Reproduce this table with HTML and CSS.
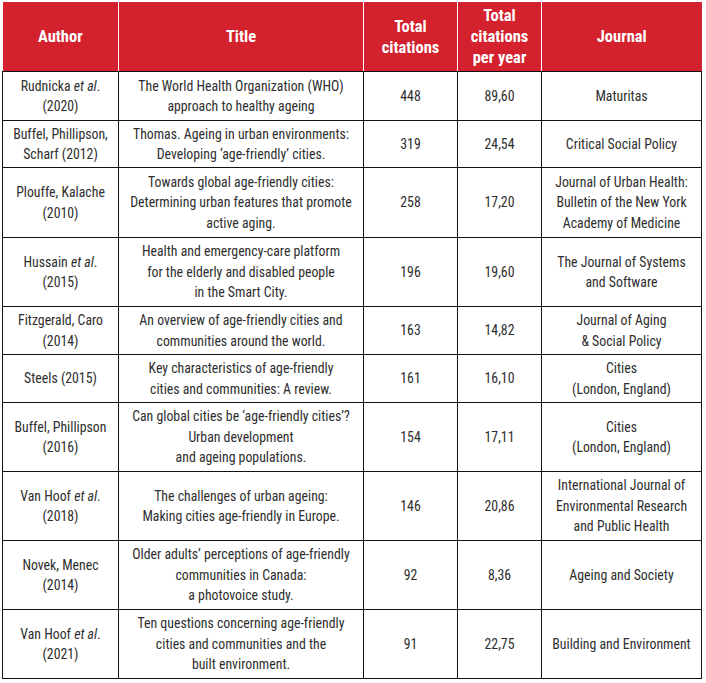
FILE: index.html
```
<!DOCTYPE html>
<html>
<head>
<meta charset="utf-8">
<link rel="stylesheet" href="styles.css">
</head>
<body>
<table class="cit">
  <colgroup>
    <col class="c-author"><col class="c-title"><col class="c-total"><col class="c-year"><col class="c-journal">
  </colgroup>
  <thead>
    <tr class="head">
      <th>Author</th>
      <th>Title</th>
      <th>Total<br>citations</th>
      <th>Total<br>citations<br>per year</th>
      <th>Journal</th>
    </tr>
  </thead>
  <tbody>
    <tr class="r49">
      <td>Rudnicka <i>et al</i>.<br>(2020)</td>
      <td>The World Health Organization (WHO)<br>approach to healthy ageing</td>
      <td>448</td><td>89,60</td><td>Maturitas</td>
    </tr>
    <tr class="r47">
      <td>Buffel, Phillipson,<br>Scharf (2012)</td>
      <td>Thomas. Ageing in urban environments:<br>Developing ‘age-friendly’ cities.</td>
      <td>319</td><td>24,54</td><td>Critical Social Policy</td>
    </tr>
    <tr class="r70">
      <td>Plouffe, Kalache<br>(2010)</td>
      <td>Towards global age-friendly cities:<br>Determining urban features that promote<br>active aging.</td>
      <td>258</td><td>17,20</td><td>Journal of Urban Health:<br>Bulletin of the New York<br>Academy of Medicine</td>
    </tr>
    <tr class="r69">
      <td>Hussain <i>et al</i>.<br>(2015)</td>
      <td>Health and emergency-care platform<br>for the elderly and disabled people<br>in the Smart City.</td>
      <td>196</td><td>19,60</td><td>The Journal of Systems<br>and Software</td>
    </tr>
    <tr class="r48">
      <td>Fitzgerald, Caro<br>(2014)</td>
      <td>An overview of age-friendly cities and<br>communities around the world.</td>
      <td>163</td><td>14,82</td><td>Journal of Aging<br>&amp; Social Policy</td>
    </tr>
    <tr class="r48">
      <td>Steels (2015)</td>
      <td>Key characteristics of age-friendly<br>cities and communities: A review.</td>
      <td>161</td><td>16,10</td><td>Cities<br>(London, England)</td>
    </tr>
    <tr class="r69">
      <td>Buffel, Phillipson<br>(2016)</td>
      <td>Can global cities be ‘age-friendly cities’?<br>Urban development<br>and ageing populations.</td>
      <td>154</td><td>17,11</td><td>Cities<br>(London, England)</td>
    </tr>
    <tr class="r69">
      <td>Van Hoof <i>et al</i>.<br>(2018)</td>
      <td>The challenges of urban ageing:<br>Making cities age-friendly in Europe.</td>
      <td>146</td><td>20,86</td><td>International Journal of<br>Environmental Research<br>and Public Health</td>
    </tr>
    <tr class="r69">
      <td>Novek, Menec<br>(2014)</td>
      <td>Older adults’ perceptions of age-friendly<br>communities in Canada:<br>a photovoice study.</td>
      <td>92</td><td>8,36</td><td>Ageing and Society</td>
    </tr>
    <tr class="r69">
      <td>Van Hoof <i>et al</i>.<br>(2021)</td>
      <td>Ten questions concerning age-friendly<br>cities and communities and the<br>built environment.</td>
      <td>91</td><td>22,75</td><td>Building and Environment</td>
    </tr>
  </tbody>
</table>
</body>
</html>
```
FILE: styles.css
```
html, body {
  background: #ffffff;
}
body {
  margin: 2px 0 0 2px;
  font-family: "Roboto Condensed", "Liberation Sans", sans-serif;
  color: #2e2e2e;
}
.cit {
  border-collapse: collapse;
  table-layout: fixed;
  width: 699px;
}
.c-author { width: 116px; }
.c-title { width: 245px; }
.c-total { width: 94px; }
.c-year { width: 84px; }
.c-journal { width: 160px; }

.cit th {
  background: #d3212d;
  color: #ffffff;
  font-weight: bold;
  font-size: 16.5px;
  line-height: 21px;
  height: 69px;
  padding: 0;
  border-left: 1px solid #ffffff;
  border-bottom: 1px solid #111111;
  vertical-align: middle;
  text-align: center;
}
.cit th:first-child {
  border-left: none;
}
.cit td {
  border: 1px solid #111111;
  font-size: 13.8px;
  line-height: 20.5px;
  padding: 0 2px;
  text-align: center;
  vertical-align: middle;
  white-space: nowrap;
}
.cit td i {
  font-style: italic;
}
.r49 td { height: 48px; }
.r47 td { height: 46px; }
.r70 td { height: 69px; }
.r69 td { height: 68px; }
.r48 td { height: 47px; }
```
